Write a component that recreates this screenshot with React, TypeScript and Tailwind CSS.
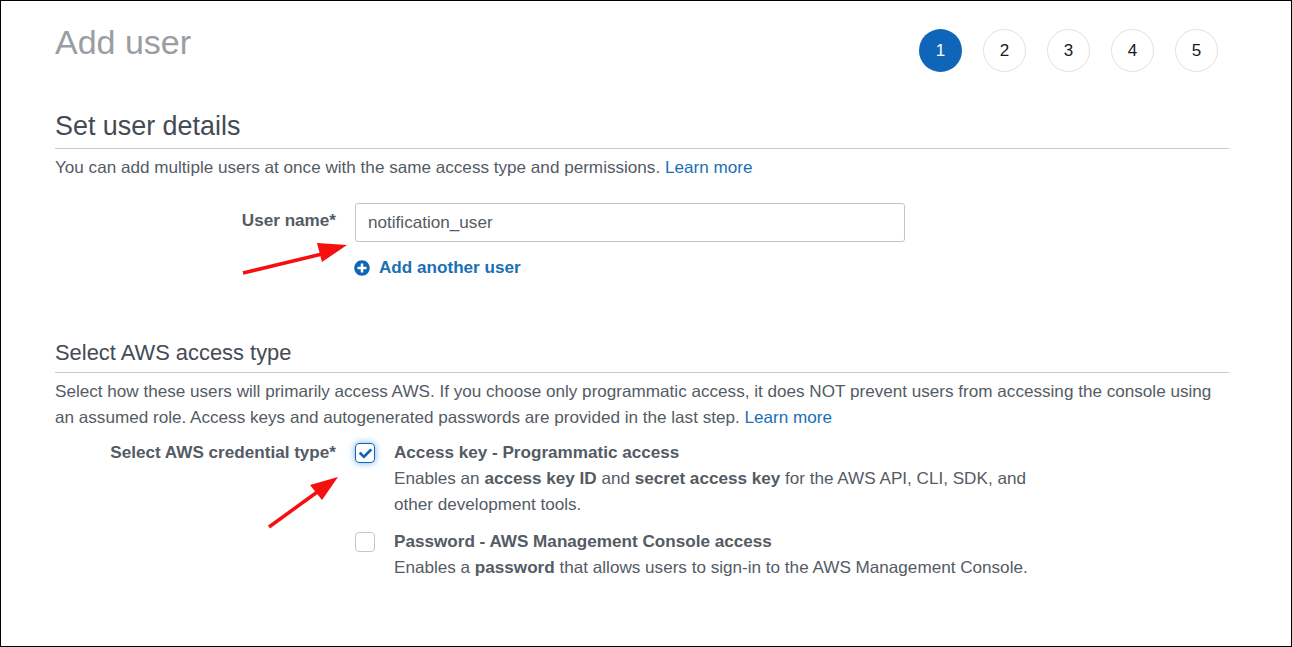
import { FaCheck, FaPlusCircle } from "react-icons/fa";

const font = "font-['Liberation_Sans','Arial',sans-serif]";

function Step({ n, active }: { n: number; active?: boolean }) {
  return (
    <div
      className={
        active
          ? "w-[43px] h-[43px] rounded-full bg-[#0f66b8] text-white flex items-center justify-center text-[17px]"
          : "w-[43px] h-[43px] rounded-full border border-[#e1e1e1] text-[#16191f] flex items-center justify-center text-[17px]"
      }
    >
      {n}
    </div>
  );
}

export default function App() {
  return (
    <div className={`${font} relative w-[1292px] h-[647px] bg-white border border-black overflow-hidden text-[17.13px] text-[#545b64]`}>
      <div className="pl-[54px] pr-[62px]">
        {/* Title + steps */}
        <div className="flex justify-between items-start h-[71px]">
          <h1 className="text-[34px] leading-[40px] mt-[21px] text-[#9a9ea3]">Add user</h1>
          <div className="flex gap-[21px] pt-[28px] pr-[11px]">
            {[1, 2, 3, 4, 5].map((n) => (
              <Step key={n} n={n} active={n === 1} />
            ))}
          </div>
        </div>

        {/* Set user details */}
        <h2 className="mt-[38px] text-[26.9px] leading-[32px] text-[#444b54] border-b border-[#c9cccf] pb-[6px]">Set user details</h2>
        <p className="mt-[8px] leading-[22px]">
          You can add multiple users at once with the same access type and permissions.{" "}
          <span className="text-[#1a6fb5]">Learn more</span>
        </p>

        <div className="flex mt-[24px]">
          <div className="w-[281px] text-right font-bold pt-[7px] leading-[22px]">User name*</div>
          <div className="ml-[19px]">
            <div className="w-[550px] h-[39px] border border-[#c2c5c8] rounded-[3px] px-[12px] flex items-center text-[#545b64]">
              notification_user
            </div>
            <div className="flex items-center gap-[9px] mt-[15px] -ml-px text-[#1a6fb5] font-bold leading-[22px]">
              <FaPlusCircle size={16} className="text-[#0f66b8]" />
              <span>Add another user</span>
            </div>
          </div>
        </div>

        {/* Access type */}
        <h2 className="mt-[60px] text-[21.9px] leading-[28px] text-[#444b54] border-b border-[#c9cccf] pb-[5px]">Select AWS access type</h2>
        <p className="mt-[6px] leading-[26px]">
          Select how these users will primarily access AWS. If you choose only programmatic access, it does NOT prevent users from accessing the console using an assumed role. Access keys and autogenerated passwords are provided in the last step.{" "}
          <span className="text-[#1a6fb5]">Learn more</span>
        </p>

        <div className="flex mt-[9px]">
          <div className="w-[281px] text-right font-bold leading-[26px]">Select AWS credential type*</div>
          <div className="ml-[19px] flex flex-col gap-[11px]">
            <div className="flex gap-[19px]">
              <div className="w-[20px] h-[20px] mt-[3px] shrink-0 rounded-[4px] border border-[#0f66b8] shadow-[0_0_7px_#6fb0e8] flex items-center justify-center text-[#0f66b8]">
                <FaCheck size={13} />
              </div>
              <div className="w-[660px] leading-[26px]">
                <div className="font-bold">Access key - Programmatic access</div>
                <div>
                  Enables an <b>access key ID</b> and <b>secret access key</b> for the AWS API, CLI, SDK, and
                  <br />
                  other development tools.
                </div>
              </div>
            </div>
            <div className="flex gap-[19px]">
              <div className="w-[20px] h-[20px] mt-[3px] shrink-0 rounded-[4px] border border-[#c6c6c6]" />
              <div className="leading-[26px]">
                <div className="font-bold">Password - AWS Management Console access</div>
                <div>
                  Enables a <b>password</b> that allows users to sign-in to the AWS Management Console.
                </div>
              </div>
            </div>
          </div>
        </div>
      </div>

      {/* Red annotation arrows */}
      <svg className="absolute left-[-1px] top-[-1px] pointer-events-none" width="1292" height="647">
        <line x1="243" y1="273" x2="322" y2="254" stroke="#f50f0f" strokeWidth="3.5" />
        <polygon points="347,245 317,243 322,262" fill="#f50f0f" />
        <line x1="269" y1="527" x2="320" y2="490" stroke="#f50f0f" strokeWidth="3.5" />
        <polygon points="338,477 310,485 322,500" fill="#f50f0f" />
      </svg>
    </div>
  );
}
